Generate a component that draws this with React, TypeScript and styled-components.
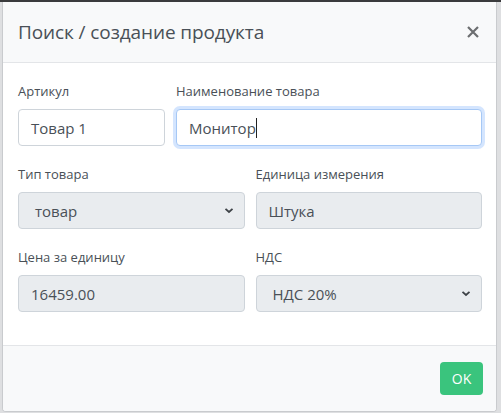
import React from "react";
import styled, { createGlobalStyle } from "styled-components";

const Global = createGlobalStyle`
  html, body { margin: 0; padding: 0; }
  body {
    background: #dedfe1;
    font-family: "Open Sans", "Liberation Sans", sans-serif;
    width: 501px;
    height: 413px;
    overflow: hidden;
    border-top: 2px solid #3a3b3d;
    box-sizing: border-box;
  }
  * { box-sizing: border-box; }
`;

const Page = styled.div`
  padding: 0 4px 0 2px;
  height: 411px;
`;

const Modal = styled.div`
  width: 495px;
  height: 410px;
  background: #fff;
  border: 1px solid #c9cbce;
  border-top: none;
  border-radius: 0 0 4px 4px;
  display: flex;
  flex-direction: column;
  overflow: hidden;
`;

const Header = styled.div`
  height: 61px;
  flex: none;
  background: #f8f9fa;
  border-bottom: 1px solid #e3e5e8;
  display: flex;
  align-items: center;
  justify-content: space-between;
  padding: 0 16px 0 15px;
`;

const Title = styled.h5`
  margin: 0;
  font-size: 19px;
  font-weight: 400;
  color: #495057;
  letter-spacing: -0.1px;
`;

const Close = styled.button`
  border: none;
  background: none;
  padding: 0;
  width: 14px;
  height: 14px;
  display: flex;
  align-items: center;
  justify-content: center;
  cursor: pointer;
`;

const Body = styled.div`
  flex: 1;
  padding: 18px 14px 0 15px;
  display: flex;
  flex-direction: column;
`;

const Row = styled.div<{ $cols: string }>`
  display: grid;
  grid-template-columns: ${(p) => p.$cols};
  column-gap: 11px;
  margin-bottom: 18px;
`;

const Group = styled.div`
  display: flex;
  flex-direction: column;
`;

const Label = styled.label`
  font-size: 13px;
  line-height: 21px;
  color: #495057;
  margin-bottom: 7px;
`;

const Input = styled.div<{ $disabled?: boolean; $focus?: boolean }>`
  height: 37px;
  border: 1px solid ${(p) => (p.$focus ? "#a6c8f5" : "#ced4da")};
  border-radius: 4px;
  background: ${(p) => (p.$disabled ? "#e9ecef" : "#fff")};
  box-shadow: ${(p) => (p.$focus ? "0 0 0 3px rgba(100,160,250,0.28)" : "none")};
  font-size: 15px;
  color: #495057;
  display: flex;
  align-items: center;
  padding: 0 12px;
`;

const SelectBox = styled(Input)`
  padding: 0 10px 0 16px;
  justify-content: space-between;
`;

const Caret = styled.span`
  display: inline-block;
  width: 1px;
  height: 20px;
  background: #222;
`;

const Footer = styled.div`
  height: 66px;
  flex: none;
  background: #f8f9fa;
  border-top: 1px solid #e3e5e8;
  display: flex;
  align-items: center;
  justify-content: flex-end;
  padding: 0 13px 0 0;
`;

const OkButton = styled.button`
  width: 43px;
  height: 33px;
  border: none;
  border-radius: 4px;
  background: #3ac47d;
  color: #fff;
  font-family: "Open Sans", "Liberation Sans", sans-serif;
  font-size: 14px;
  padding: 0;
  cursor: pointer;
`;

const Chevron = () => (
  <svg width="10" height="7" viewBox="0 0 10 7">
    <path d="M1.5 1.8 L5 5 L8.5 1.8" fill="none" stroke="#3d4247" strokeWidth="1.8" />
  </svg>
);

const XIcon = () => (
  <svg width="12" height="12" viewBox="0 0 12 12">
    <path d="M1 1 L11 11 M11 1 L1 11" stroke="#6c6e70" strokeWidth="2.2" />
  </svg>
);

export default function App() {
  return (
    <>
      <Global />
      <Page>
        <Modal>
          <Header>
            <Title>Поиск / создание продукта</Title>
            <Close aria-label="Закрыть">
              <XIcon />
            </Close>
          </Header>
          <Body>
            <Row $cols="147px 1fr">
              <Group>
                <Label>Артикул</Label>
                <Input>Товар 1</Input>
              </Group>
              <Group>
                <Label>Наименование товара</Label>
                <Input $focus>
                  Монитор
                  <Caret />
                </Input>
              </Group>
            </Row>
            <Row $cols="1fr 1fr">
              <Group>
                <Label>Тип товара</Label>
                <SelectBox $disabled>
                  <span>товар</span>
                  <Chevron />
                </SelectBox>
              </Group>
              <Group>
                <Label>Единица измерения</Label>
                <Input $disabled>Штука</Input>
              </Group>
            </Row>
            <Row $cols="1fr 1fr">
              <Group>
                <Label>Цена за единицу</Label>
                <Input $disabled>16459.00</Input>
              </Group>
              <Group>
                <Label>НДС</Label>
                <SelectBox $disabled>
                  <span>НДС 20%</span>
                  <Chevron />
                </SelectBox>
              </Group>
            </Row>
          </Body>
          <Footer>
            <OkButton>OK</OkButton>
          </Footer>
        </Modal>
      </Page>
    </>
  );
}
